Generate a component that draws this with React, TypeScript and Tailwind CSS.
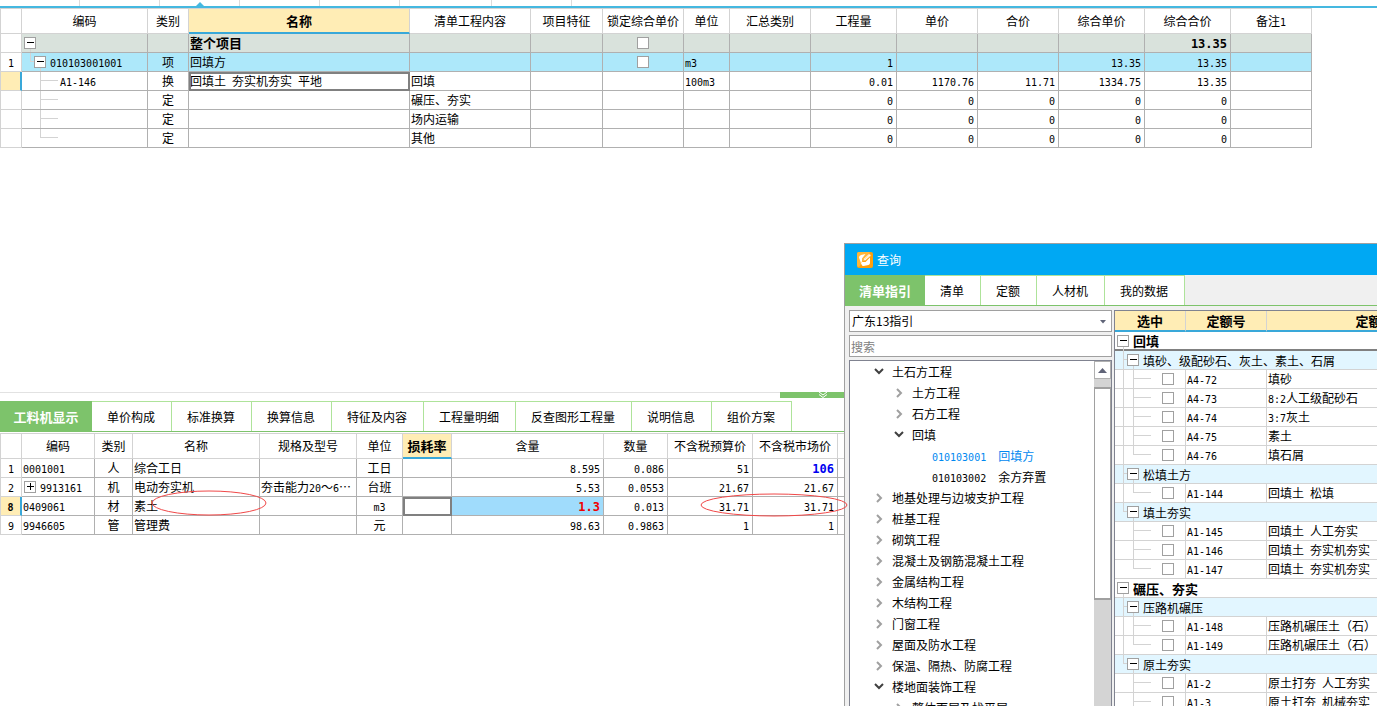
import { ReactNode } from 'react';
import clsx from 'clsx';

/* Latin runs use the narrow monospace face, CJK stays in the body face */
const Txt = ({ children }: { children: string }) => (
  <>
    {children.split(/([\x20-\x7e]+)/).map((part, i) =>
      i % 2 ? (
        <span key={i} className="whitespace-pre font-['DejaVu_Sans_Mono',monospace] text-[10px] leading-none">{part}</span>
      ) : (
        part
      )
    )}
  </>
);

const Lines = ({ width, d }: { width: number; d: string }) => (
  <svg width={width} height="18" className="shrink-0 overflow-visible" fill="none" stroke="#d3d3d3" shapeRendering="crispEdges">
    <path d={d} />
  </svg>
);

const Toggle = ({ open = true }: { open?: boolean }) => (
  <button aria-label={open ? '折叠' : '展开'} className="size-3 shrink-0 border border-[#a0a0a0] bg-white">
    <svg width="10" height="10" stroke="#000" shapeRendering="crispEdges">
      <path d={open ? 'M2 4.5H9' : 'M2 4.5H9M5.5 1V8'} />
    </svg>
  </button>
);

const Check = ({ label }: { label: string }) => (
  <input type="checkbox" aria-label={label} className="block size-3 shrink-0 appearance-none border border-[#a0a0a0] bg-white" />
);

const Chevron = ({ open }: { open?: boolean }) => (
  <svg width="10" height="10" className="shrink-0" fill="none" strokeWidth="2" stroke={open ? '#404040' : '#a0a0a0'}>
    <path d={open ? 'M1 2L5 6L9 2' : 'M3 1L7 5L3 9'} />
  </svg>
);

type Col = { name: string; w: string; align?: 'center' | 'right'; active?: boolean };

const alignClass = (a?: string) => (a === 'right' ? 'text-right pr-[3px]' : a === 'center' ? 'text-center' : 'pl-px');

const HeadRow = ({ cols }: { cols: Col[] }) => (
  <thead>
    <tr className="h-[26px]">
      {cols.map((c, i) => (
        <th
          key={i}
          className={clsx(
            'whitespace-nowrap border-r border-t border-[#d3d3d3] p-0 text-center',
            c.w,
            i === 0 && 'border-l',
            c.active ? 'border-b-2 border-b-[#39a8d9] bg-[#ffedb5] text-[13px] font-bold' : 'border-b font-normal'
          )}
        >
          <Txt>{c.name}</Txt>
        </th>
      ))}
    </tr>
  </thead>
);

const RowHead = ({ n, active }: { n: string; active?: boolean }) => (
  <td
    className={clsx(
      'border-b border-l border-[#d3d3d3] p-0 text-center',
      active ? 'border-r-2 border-r-[#39a8d9] bg-[#ffedb5] font-bold' : 'border-r'
    )}
  >
    <Txt>{n}</Txt>
  </td>
);

const projectCols: Col[] = [
  { name: '', w: 'w-[22px]' },
  { name: '编码', w: 'w-[126px]' },
  { name: '类别', w: 'w-[41px]', align: 'center' },
  { name: '名称', w: 'w-[221px]', active: true },
  { name: '清单工程内容', w: 'w-[121px]' },
  { name: '项目特征', w: 'w-[72px]' },
  { name: '锁定综合单价', w: 'w-[81px]', align: 'center' },
  { name: '单位', w: 'w-[46px]' },
  { name: '汇总类别', w: 'w-[81px]' },
  { name: '工程量', w: 'w-[86px]', align: 'right' },
  { name: '单价', w: 'w-[81px]', align: 'right' },
  { name: '合价', w: 'w-[81px]', align: 'right' },
  { name: '综合单价', w: 'w-[86px]', align: 'right' },
  { name: '综合合价', w: 'w-[86px]', align: 'right' },
  { name: '备注1', w: 'w-[81px]' },
];

type ProjectRow = { n: string; kind?: 'group' | 'item'; guide: number; d: string; code: string; check?: boolean; cells: string[] };

const branch = 'M18.5 0V19M18.5 8.5H36';
const branchEnd = 'M18.5 0V8.5H36';

const projectRows: ProjectRow[] = [
  { n: '', kind: 'group', guide: 2, d: 'M8.5 15V19', code: '', check: true, cells: ['', '整个项目', '', '', '', '', '', '', '', '', '', '13.35', ''] },
  { n: '1', kind: 'item', guide: 12, d: 'M8.5 0V8.5H12M18.5 15V19', code: '010103001001', check: true, cells: ['项', '回填方', '', '', '', 'm3', '', '1', '', '', '13.35', '13.35', ''] },
  { n: '', guide: 36, d: branch, code: 'A1-146', cells: ['换', '回填土 夯实机夯实 平地', '回填', '', '', '100m3', '', '0.01', '1170.76', '11.71', '1334.75', '13.35', ''] },
  { n: '', guide: 36, d: branch, code: '', cells: ['定', '', '碾压、夯实', '', '', '', '', '0', '0', '0', '0', '0', ''] },
  { n: '', guide: 36, d: branch, code: '', cells: ['定', '', '场内运输', '', '', '', '', '0', '0', '0', '0', '0', ''] },
  { n: '', guide: 36, d: branchEnd, code: '', cells: ['定', '', '其他', '', '', '', '', '0', '0', '0', '0', '0', ''] },
];

const ProjectTable = () => (
  <table className="w-[1312px] table-fixed border-separate border-spacing-0">
    <HeadRow cols={projectCols} />
    <tbody>
      {projectRows.map((row, r) => (
        <tr key={r} className="h-[19px]">
          <RowHead n={row.n} active={r === 2} />
          {['', ...row.cells].map((text, c) => (
            <td
              key={c}
              className={clsx(
                'overflow-hidden whitespace-nowrap border-b border-r border-[#b0b0b0] p-0',
                row.kind === 'group' && 'bg-[#d9e2dc]',
                row.kind === 'item' && 'bg-[#ade8fa]',
                r === 2 && c === 2 && 'outline-2 -outline-offset-2 outline-[#808080]',
                c > 0 && alignClass(projectCols[c + 1].align)
              )}
            >
              {c === 0 ? (
                <div className="flex h-[18px] items-center">
                  <Lines width={row.guide} d={row.d} />
                  {row.kind && <Toggle />}
                  <span className={row.kind ? 'ml-1' : 'ml-[2px]'}><Txt>{row.code}</Txt></span>
                </div>
              ) : c === 5 && row.check ? (
                <div className="flex justify-center"><Check label="锁定综合单价" /></div>
              ) : row.kind === 'group' ? (
                text === '13.35' ? (
                  <b className="font-['DejaVu_Sans_Mono',monospace] text-[12px] leading-none">{text}</b>
                ) : (
                  <b className="text-[13px] leading-none">{text}</b>
                )
              ) : (
                <Txt>{text}</Txt>
              )}
            </td>
          ))}
        </tr>
      ))}
    </tbody>
  </table>
);

const resourceCols: Col[] = [
  { name: '', w: 'w-[22px]' },
  { name: '编码', w: 'w-[73px]' },
  { name: '类别', w: 'w-[38px]', align: 'center' },
  { name: '名称', w: 'w-[127px]' },
  { name: '规格及型号', w: 'w-[97px]' },
  { name: '单位', w: 'w-[46px]', align: 'center' },
  { name: '损耗率', w: 'w-[49px]', active: true },
  { name: '含量', w: 'w-[152px]', align: 'right' },
  { name: '数量', w: 'w-[64px]', align: 'right' },
  { name: '不含税预算价', w: 'w-[85px]', align: 'right' },
  { name: '不含税市场价', w: 'w-[85px]', align: 'right' },
  { name: '', w: 'w-[80px]' },
];

const resourceRows = [
  ['1', '0001001', '人', '综合工日', '', '工日', '', '8.595', '0.086', '51', '106', ''],
  ['2', '9913161', '机', '电动夯实机', '夯击能力20～6⋯', '台班', '', '5.53', '0.0553', '21.67', '21.67', ''],
  ['8', '0409061', '材', '素土', '', 'm3', '', '1.3', '0.013', '31.71', '31.71', ''],
  ['9', '9946605', '管', '管理费', '', '元', '', '98.63', '0.9863', '1', '1', ''],
];

const ResourceTable = () => (
  <table className="mt-px w-[918px] table-fixed border-separate border-spacing-0">
    <HeadRow cols={resourceCols} />
    <tbody>
      {resourceRows.map(([n, ...cells], r) => (
        <tr key={n} className="h-[19px]">
          <RowHead n={n} active={n === '8'} />
          {cells.map((text, c) => {
            const strong = text === '106' ? 'text-[#0000f0]' : text === '1.3' ? 'text-[#f00000]' : '';
            return (
              <td
                key={c}
                className={clsx(
                  'overflow-hidden whitespace-nowrap border-b border-r border-[#b0b0b0] p-0',
                  r === 2 && c === 5 && 'outline-2 -outline-offset-2 outline-[#808080]',
                  r === 2 && c === 6 && 'bg-[#a0dcfc]',
                  alignClass(resourceCols[c + 1].align)
                )}
              >
                {r === 1 && c === 0 ? (
                  <div className="flex items-center gap-1 pl-px"><Toggle open={false} /><span><Txt>{text}</Txt></span></div>
                ) : strong ? (
                  <b className={clsx("font-['DejaVu_Sans_Mono',monospace] text-[12px] leading-none", strong)}>{text}</b>
                ) : (
                  <Txt>{text}</Txt>
                )}
              </td>
            );
          })}
        </tr>
      ))}
    </tbody>
  </table>
);

const Tabs = ({ items, activeW }: { items: string[]; activeW: string }) => (
  <nav className="flex h-[31px] shrink-0 border-b border-b-[#7dc36b]">
    {items.map((t, i) => (
      <button
        key={t}
        className={clsx(
          'shrink-0 whitespace-nowrap border-t pt-px',
          i === 0
            ? clsx('border-t-[#7dc36b] bg-[#7dc36b] text-[13px] font-bold text-white', activeW)
            : 'border-r border-r-[#aee39a] border-t-[#aee39a] bg-white pl-[15px] pr-4'
        )}
      >
        {t}
      </button>
    ))}
  </nav>
);

const treeItems = [
  { level: 0, open: true, text: '土石方工程' },
  { level: 1, text: '土方工程' },
  { level: 1, text: '石方工程' },
  { level: 1, open: true, text: '回填' },
  { level: 2, text: '010103001  回填方', selected: true },
  { level: 2, text: '010103002  余方弃置' },
  { level: 0, text: '地基处理与边坡支护工程' },
  { level: 0, text: '桩基工程' },
  { level: 0, text: '砌筑工程' },
  { level: 0, text: '混凝土及钢筋混凝土工程' },
  { level: 0, text: '金属结构工程' },
  { level: 0, text: '木结构工程' },
  { level: 0, text: '门窗工程' },
  { level: 0, text: '屋面及防水工程' },
  { level: 0, text: '保温、隔热、防腐工程' },
  { level: 0, open: true, text: '楼地面装饰工程' },
  { level: 1, text: '整体面层及找平层' },
];

const GuideTree = () => (
  <div className="mt-[3px] flex min-h-0 flex-1 overflow-hidden border border-b-0 border-[#808390] bg-white">
    <ul className="min-w-0 flex-1">
      {treeItems.map((it) => (
        <li
          key={it.text}
          className={clsx(
            'flex h-[21px] items-center gap-2 whitespace-nowrap',
            it.level === 0 ? 'pl-6' : it.level === 1 ? 'pl-11' : 'pl-[82px]',
            it.selected && 'text-[#0088f0]'
          )}
        >
          {it.level < 2 && <Chevron open={it.open} />}
          <span className="pt-px"><Txt>{it.text}</Txt></span>
        </li>
      ))}
    </ul>
    <div className="flex w-[17px] flex-col bg-[#d4d4d4]">
      <button aria-label="向上滚动" className="flex h-[18px] items-center justify-center border border-[#b0b0b0] bg-white">
        <svg width="9" height="5" fill="#606478"><path d="M4.5 0L9 5H0Z" /></svg>
      </button>
      <div className="mt-2 h-[213px] border border-y-2 border-[#a0a0a0] bg-white" />
    </div>
  </div>
);

type QuotaRow = { level: 0 | 1 | 2; d: string; text: string; code?: string };

const outer = 'M8.5 0V19';
const mid = 'M8.5 0V19M8.5 8.5H12M18.5 15V19';
const midEnd = 'M8.5 0V8.5H12M18.5 15V19';

const quotaRows: QuotaRow[] = [
  { level: 0, d: 'M8.5 15V19', text: '回填' },
  { level: 1, d: mid, text: '填砂、级配砂石、灰土、素土、石屑' },
  { level: 2, d: outer + branch, code: 'A4-72', text: '填砂' },
  { level: 2, d: outer + branch, code: 'A4-73', text: '8:2人工级配砂石' },
  { level: 2, d: outer + branch, code: 'A4-74', text: '3:7灰土' },
  { level: 2, d: outer + branch, code: 'A4-75', text: '素土' },
  { level: 2, d: outer + branchEnd, code: 'A4-76', text: '填石屑' },
  { level: 1, d: mid, text: '松填土方' },
  { level: 2, d: outer + branchEnd, code: 'A1-144', text: '回填土 松填' },
  { level: 1, d: midEnd, text: '填土夯实' },
  { level: 2, d: branch, code: 'A1-145', text: '回填土 人工夯实' },
  { level: 2, d: branch, code: 'A1-146', text: '回填土 夯实机夯实' },
  { level: 2, d: branchEnd, code: 'A1-147', text: '回填土 夯实机夯实' },
  { level: 0, d: 'M8.5 15V19', text: '碾压、夯实' },
  { level: 1, d: mid, text: '压路机碾压' },
  { level: 2, d: outer + branch, code: 'A1-148', text: '压路机碾压土（石）' },
  { level: 2, d: outer + branchEnd, code: 'A1-149', text: '压路机碾压土（石）' },
  { level: 1, d: midEnd, text: '原土夯实' },
  { level: 2, d: branch, code: 'A1-2', text: '原土打夯 人工夯实' },
  { level: 2, d: branch, code: 'A1-3', text: '原土打夯 机械夯实' },
];

const quotaCell = 'border-b border-r border-[#d3d3d3] p-0 whitespace-nowrap';

const QuotaTable = () => (
  <div className="min-w-0 flex-1 overflow-hidden border-l border-t border-[#808390] bg-white">
    <table className="w-[382px] table-fixed border-separate border-spacing-0">
      <thead>
        <tr className="h-[21px] bg-[#ffedb5] text-[13px]">
          {[['选中', 'w-[71px]'], ['定额号', 'w-[81px]'], ['定额名称', 'w-[230px]']].map(([t, w]) => (
            <th key={t} className={clsx('border-b-2 border-r border-b-[#39a8d9] border-r-[#d3d3d3] p-0 font-bold', w)}>{t}</th>
          ))}
        </tr>
      </thead>
      <tbody>
        {quotaRows.map((row, i) => (
          <tr key={i} className="h-[19px]">
            {row.level < 2 ? (
              <td
                colSpan={3}
                className={clsx(quotaCell, row.level === 1 && 'bg-[#e2f6ff]', i === 0 && 'border-b-2 border-b-[#808080]')}
              >
                <div className={clsx('flex items-center', i === 0 ? 'h-[17px]' : 'h-[18px]')}>
                  <Lines width={row.level ? 12 : 2} d={row.d} />
                  <Toggle />
                  <span className={clsx('ml-1 pt-px', row.level === 0 && 'text-[13px] font-bold')}>{row.text}</span>
                </div>
              </td>
            ) : (
              <>
                <td className={quotaCell}>
                  <div className="flex h-[18px] items-center">
                    <Lines width={36} d={row.d} />
                    <span className="ml-[11px]"><Check label={row.code!} /></span>
                  </div>
                </td>
                <td className={clsx(quotaCell, 'pl-px')}><Txt>{row.code!}</Txt></td>
                <td className={clsx(quotaCell, 'pl-px')}><Txt>{row.text}</Txt></td>
              </>
            )}
          </tr>
        ))}
      </tbody>
    </table>
  </div>
);

const QueryWindow = () => (
  <section className="absolute bottom-0 left-[844px] right-0 top-[243px] z-10 flex flex-col overflow-hidden border-l border-t border-[#a0a0a0] bg-[#f0f0f0]">
    <header className="flex h-[31px] shrink-0 items-center gap-1 bg-[#00a8f3] pl-3 text-white">
      <svg width="16" height="16" viewBox="0 0 16 16" fill="none">
        <rect width="16" height="16" rx="2" fill="#ff9f0a" />
        <path d="M0 13V2Q0 0 2 0H13L2 15Q0 15 0 13Z" fill="#ffb638" />
        <path d="M2 5.5Q2 3.5 4 3L8.5 2L5 6.5L5 10L8.5 10L13 5.5V11Q13 12.5 11.5 13L6.5 14Q5 14 4.5 12.5Z" fill="#fff" />
        <path d="M6 9L6.5 6.8L12 1.5L14.2 3.5L8.5 8.6Z" fill="#fff" stroke="#ffab24" strokeWidth="0.8" />
        <path d="M7.5 7.6L12.5 3M4 10.5L5 10" stroke="#ffc66a" strokeWidth="0.6" />
      </svg>
      <h2>查询</h2>
    </header>
    <Tabs activeW="w-20" items={['清单指引', '清单', '定额', '人材机', '我的数据']} />
    <div className="flex min-h-0 flex-1 gap-[2px] pl-1 pt-1">
      <div className="flex w-[263px] shrink-0 flex-col">
        <div className="relative">
          <select aria-label="指引" className="block h-[22px] w-full appearance-none border border-[#a0a0a0] bg-white pl-[2px]">
            <option>广东13指引</option>
          </select>
          <svg width="6" height="4" fill="#606478" className="pointer-events-none absolute right-[6px] top-[10px]"><path d="M0 0H6L3 3.5Z" /></svg>
        </div>
        <input
          aria-label="搜索"
          placeholder="搜索"
          className="mt-[3px] block h-[22px] w-full border border-[#a0a0a0] bg-white pl-px placeholder:text-[#808080]"
        />
        <GuideTree />
      </div>
      <QuotaTable />
    </div>
  </section>
);

const Mark = ({ className, children }: { className: string; children: ReactNode }) => (
  <svg fill="none" stroke="#f04848" className={clsx('pointer-events-none absolute z-20', className)}>{children}</svg>
);

const App = () => {
  return (
    <main className="relative flex h-screen flex-col overflow-hidden bg-white font-['Noto_Sans_CJK_SC',sans-serif] text-[12px] leading-[18px] text-black">
      {/* Bottom edge of the tab strip above the grid */}
      <div className="flex h-2 shrink-0 border-b-2 border-[#45b8e0]">
        {[0, 1, 2, 3, 4].map((i) => (
          <div key={i} className="flex w-20 items-end justify-center border-r border-[#dcdcdc]">
            {i === 2 && <svg width="8" height="4" fill="#45b8e0"><path d="M4 0L8 4H0Z" /></svg>}
          </div>
        ))}
        <div className="w-[92px] border-r border-[#dcdcdc]" />
        <div className="w-20 border-r border-[#dcdcdc]" />
      </div>
      <div className="min-h-0 flex-1"><ProjectTable /></div>

      <section className="relative h-[314px] shrink-0">
        <div className="flex h-[9px] items-start border-t border-[#e2e2e2]">
          <div className="-mt-px ml-[780px] flex h-[6px] w-[85px] justify-center bg-[#7dc36b]">
            <svg width="8" height="6" fill="none" stroke="#fff"><path d="M0 0L4 3L8 0M0 2.5L4 5.5L8 2.5" /></svg>
          </div>
        </div>
        <Tabs
          activeW="w-[92px]"
          items={['工料机显示', '单价构成', '标准换算', '换算信息', '特征及内容', '工程量明细', '反查图形工程量', '说明信息', '组价方案']}
        />
        <ResourceTable />
        <Mark className="left-[151px] top-[97px] h-[28px] w-[116px]"><ellipse cx="58" cy="14" rx="57" ry="12" /></Mark>
        <Mark className="left-[700px] top-[100px] h-[26px] w-[148px]"><ellipse cx="74" cy="13" rx="73" ry="11" /></Mark>
      </section>

      <QueryWindow />
    </main>
  );
};

export default App;
